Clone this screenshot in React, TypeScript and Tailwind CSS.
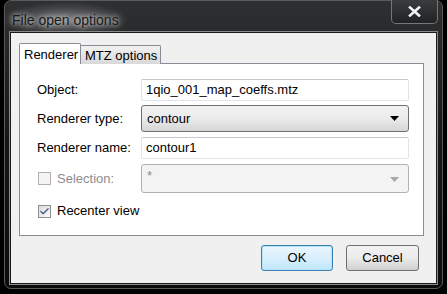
import { Check } from 'lucide-react';

const font = { fontFamily: '"Liberation Sans", "Noto Sans CJK JP", sans-serif' };

function Field({ label, children }: { label: string; children: React.ReactNode }) {
  return (
    <div className="flex items-center h-full">
      <div className="w-[104px] text-[13px] text-black">{label}</div>
      {children}
    </div>
  );
}

export default function App() {
  return (
    <div className="w-[447px] h-[294px] bg-black overflow-hidden text-[13px]" style={font}>
      {/* window frame */}
      <div className="ml-[4px] w-[439px] h-[289px] rounded-[7px] border border-[#5a5a5a] bg-gradient-to-b from-[#2e3032] via-[#151617] to-[#0b0c0d] flex flex-col px-[5px]">
        {/* title bar */}
        <div className="h-[31px] flex items-start justify-between">
          <div className="mt-[1px] -ml-[8px] px-[10px] pt-[9px] pb-[6px] bg-[radial-gradient(ellipse_closest-side,rgba(190,190,190,0.55),rgba(150,150,150,0.25)_60%,transparent)]">
            <span className="text-[14px] leading-none text-[#1a1a1a] [text-shadow:0_0_4px_#d8d8d8,0_0_8px_#b0b0b0]">
              File open options
            </span>
          </div>
          <div className="w-[47px] h-[24px] -mt-px mr-[-1px] rounded-b-[5px] border border-[#767676] border-t-0 bg-gradient-to-b from-[#3a3c3e] to-[#202224] flex items-center justify-center">
            <svg width="13" height="11" viewBox="0 0 13 11">
              <path d="M2 1.5 L11 9.5 M11 1.5 L2 9.5" stroke="#f4f4f4" strokeWidth="2.6" strokeLinecap="square" />
            </svg>
          </div>
        </div>

        {/* client area */}
        <div className="w-[427px] h-[252px] border border-[#1b1b1b] outline outline-1 outline-[#8a8a8a] bg-[#f0f0f0] flex flex-col pl-[8px] pt-[10px]">
          {/* tabs */}
          <div className="flex items-end h-[21px] relative z-10">
            <div className="w-[62px] h-[21px] bg-white border border-[#898c95] border-b-0 rounded-t-[2px] text-[13px] leading-[19px] pl-[4px] pt-[1px]">
              Renderer
            </div>
            <div className="w-[80px] h-[19px] bg-gradient-to-b from-[#f2f2f2] to-[#d8d8d8] border border-[#898c95] border-l-0 border-b-0 rounded-tr-[2px] text-[13px] leading-[19px] pl-[4px]">
              MTZ options
            </div>
          </div>
          {/* panel */}
          <div className="w-[405px] h-[173px] -mt-px bg-white border border-[#898c95] flex flex-col pl-[17px] pr-[14px] pt-[15px]">
            <div className="h-[22px]">
              <Field label="Object:">
                <div className="flex-1 h-[22px] border border-[#e0e3ea] border-t-[#c5c8ce] rounded-[2px] pl-[4px] leading-[20px]">
                  1qio_001_map_coeffs.mtz
                </div>
              </Field>
            </div>
            <div className="h-[27px] mt-[4px]">
              <Field label="Renderer type:">
                <div className="flex-1 h-[27px] border border-[#707070] rounded-[3px] bg-gradient-to-b from-[#f2f2f2] via-[#ebebeb] to-[#d5d5d5] flex items-center justify-between pl-[5px] pr-[9px]">
                  <span>contour</span>
                  <svg width="9" height="5" viewBox="0 0 9 5">
                    <path d="M0 0 H9 L4.5 5 Z" fill="#000" />
                  </svg>
                </div>
              </Field>
            </div>
            <div className="h-[22px] mt-[5px]">
              <Field label="Renderer name:">
                <div className="flex-1 h-[22px] border border-[#e0e3ea] border-t-[#c5c8ce] rounded-[2px] pl-[4px] leading-[20px]">
                  contour1
                </div>
              </Field>
            </div>
            <div className="h-[29px] mt-[5px]">
              <div className="flex items-center h-full">
                <div className="w-[104px] flex items-center gap-[6px] text-[#8d8d8d]">
                  <div className="w-[13px] h-[13px] border border-[#b0b0b0] bg-[#f4f4f4] ml-[1px]" />
                  <span>Selection:</span>
                </div>
                <div className="flex-1 h-[29px] border border-[#adb2b5] rounded-[3px] bg-[#f3f3f3] flex items-start justify-between pl-[5px] pr-[9px] text-[#8d8d8d]">
                  <span className="leading-[22px]">*</span>
                  <svg width="9" height="5" viewBox="0 0 9 5" className="mt-[12px]">
                    <path d="M0 0 H9 L4.5 5 Z" fill="#a6a6a6" />
                  </svg>
                </div>
              </div>
            </div>
            <div className="flex items-center gap-[6px] mt-[10px] h-[16px]">
              <div className="w-[13px] h-[13px] border border-[#8e8f8f] bg-gradient-to-br from-[#dcdcdc] to-[#fbfbfb] ml-[1px] flex items-center justify-center">
                <Check size={11} strokeWidth={3} color="#4a5f97" />
              </div>
              <span>Recenter view</span>
            </div>
          </div>
          {/* buttons */}
          <div className="flex justify-end gap-[13px] pr-[17px] mt-[9px]">
            <div className="w-[72px] h-[26px] rounded-[3px] border border-[#3c7fb1] bg-gradient-to-b from-[#eaf6fd] via-[#d9f0fc] to-[#bee6fd] shadow-[inset_0_0_0_1px_#b6e3f8] flex items-center justify-center">
              OK
            </div>
            <div className="w-[73px] h-[26px] rounded-[3px] border border-[#707070] bg-gradient-to-b from-[#f2f2f2] via-[#ebebeb] to-[#cfcfcf] flex items-center justify-center">
              Cancel
            </div>
          </div>
        </div>
      </div>
    </div>
  );
}
